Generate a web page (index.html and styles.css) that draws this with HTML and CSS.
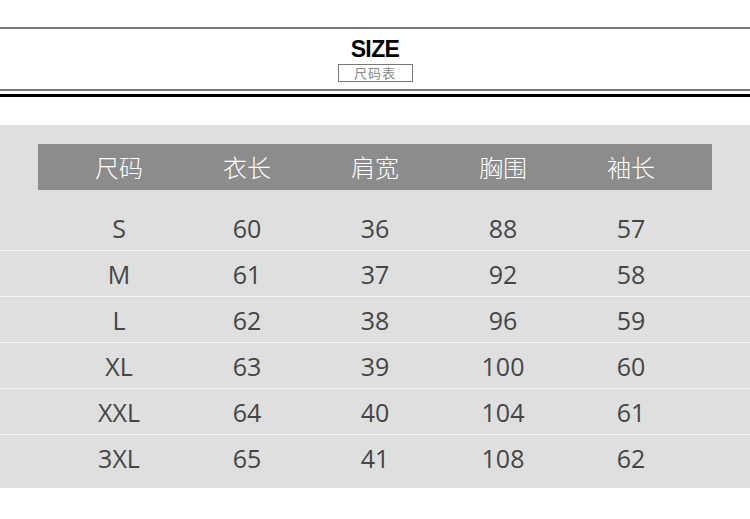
FILE: index.html
```html
<!DOCTYPE html>
<html lang="zh">
<head>
<meta charset="utf-8">
<link rel="stylesheet" href="styles.css">
</head>
<body>
<header class="title">
  <div class="title-inner">
    <h1 class="size">SIZE</h1>
    <div class="label">尺码表</div>
  </div>
</header>
<div class="rule-black"></div>
<section class="chart">
  <div class="head">
    <div class="grid">
      <span>尺码</span><span>衣长</span><span>肩宽</span><span>胸围</span><span>袖长</span>
    </div>
  </div>
  <div class="rows">
    <div class="row"><div class="grid"><span>S</span><span>60</span><span>36</span><span>88</span><span>57</span></div></div>
    <div class="row"><div class="grid"><span>M</span><span>61</span><span>37</span><span>92</span><span>58</span></div></div>
    <div class="row"><div class="grid"><span>L</span><span>62</span><span>38</span><span>96</span><span>59</span></div></div>
    <div class="row"><div class="grid"><span>XL</span><span>63</span><span>39</span><span>100</span><span>60</span></div></div>
    <div class="row"><div class="grid"><span>XXL</span><span>64</span><span>40</span><span>104</span><span>61</span></div></div>
    <div class="row"><div class="grid"><span>3XL</span><span>65</span><span>41</span><span>108</span><span>62</span></div></div>
  </div>
</section>
</body>
</html>
```
FILE: styles.css
```css
html, body {
  margin: 0;
  padding: 0;
  background: #ffffff;
}
body {
  width: 750px;
  height: 519px;
  overflow: hidden;
  font-family: "Open Sans", "Noto Sans CJK SC", sans-serif;
}
.title {
  margin-top: 27px;
  border-top: 2px solid #7a7a7a;
  border-bottom: 2px solid #7a7a7a;
  height: 60px;
  box-sizing: content-box;
}
.title-inner {
  display: flex;
  flex-direction: column;
  align-items: center;
}
.size {
  margin: 0;
  margin-top: 7px;
  font-family: "Liberation Sans", Arial, sans-serif;
  font-weight: bold;
  font-size: 23px;
  line-height: 26px;
  letter-spacing: -0.6px;
  color: #000;
}
.label {
  margin-top: 2px;
  width: 73px;
  height: 16px;
  border: 1px solid #777;
  font-family: "Noto Sans CJK SC", sans-serif;
  font-size: 13px;
  line-height: 16px;
  text-align: center;
  color: #888;
  letter-spacing: 1px;
}
.rule-black {
  margin-top: 3px;
  height: 3px;
  background: #000;
}
.chart {
  margin-top: 28px;
  background: #dfdfdf;
  padding-top: 19px;
  padding-bottom: 8px;
}
.head {
  width: 674px;
  height: 46px;
  margin: 0 auto;
  background: #8c8c8c;
  display: flex;
  justify-content: center;
}
.grid {
  width: 640px;
  margin: 0 auto;
  display: grid;
  grid-template-columns: repeat(5, 128px);
  align-items: center;
  text-align: center;
}
.head .grid span {
  font-family: "Noto Sans CJK SC", sans-serif;
  font-weight: 300;
  font-size: 24px;
  line-height: 46px;
  color: #ffffff;
}
.rows {
  margin-top: 15px;
}
.row {
  height: 45px;
  border-bottom: 1px solid #f6f6f6;
  display: flex;
  align-items: center;
}
.row:last-child {
  border-bottom: none;
}
.row .grid span {
  font-size: 25px;
  line-height: 45px;
  padding-top: 1px;
  color: #454545;
}
```
